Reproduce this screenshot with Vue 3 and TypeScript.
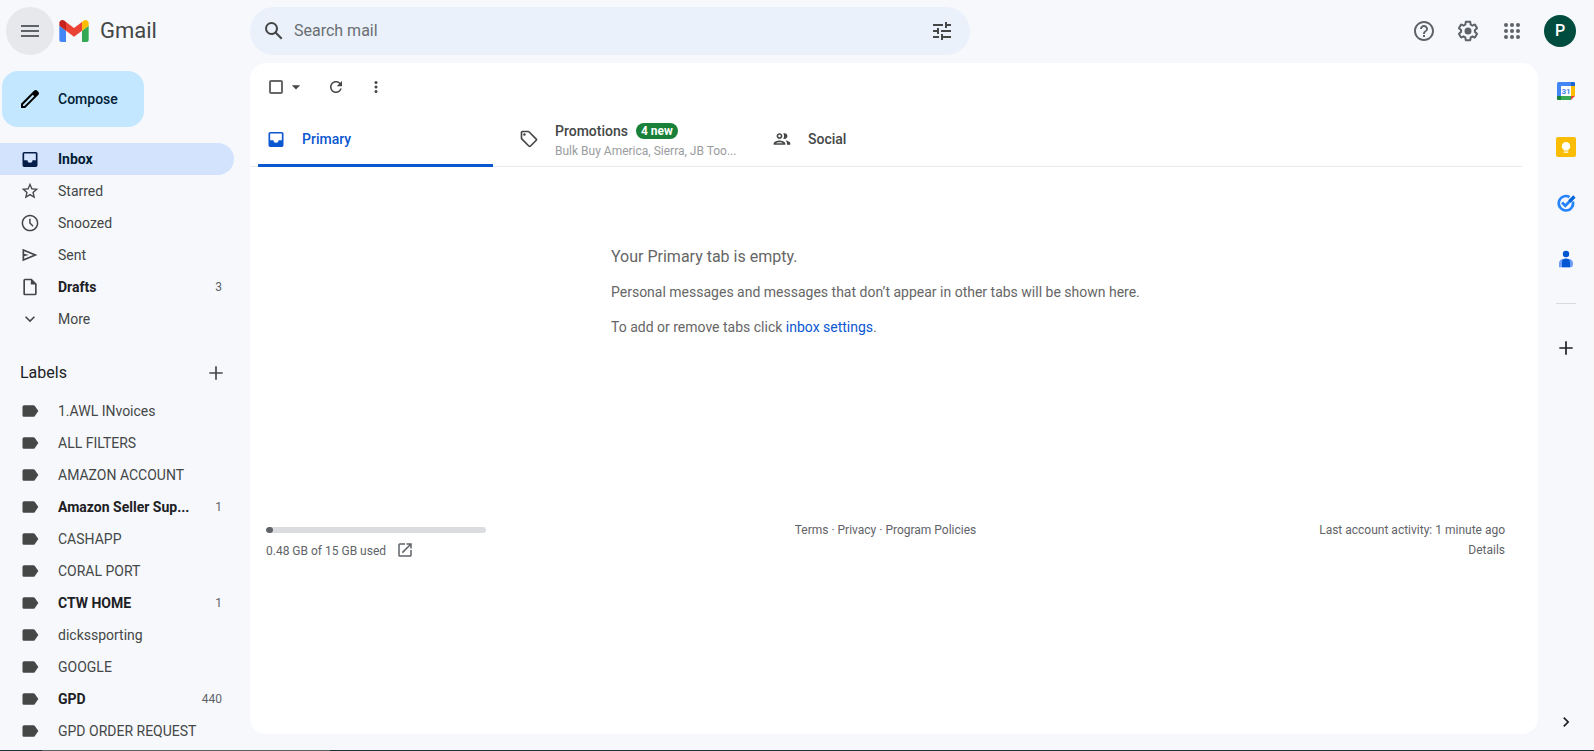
<script setup lang="ts">
import { ref } from 'vue'

interface NavItem {
  name: string
  icon: string
  count?: number
  bold?: boolean
  active?: boolean
}

interface LabelItem {
  name: string
  count?: number
}

const labelIcon =
  'M17.63 5.84C17.27 5.33 16.67 5 16 5L5 5.01C3.9 5.01 3 5.9 3 7v10c0 1.1.9 1.99 2 1.99L16 19c.67 0 1.27-.33 1.63-.84L22 12l-4.37-6.16z'
const inboxIcon =
  'M19 3.500H5a2 2 0 0 0-2 2v14a2 2 0 0 0 2 2h14a2 2 0 0 0 2-2v-14a2 2 0 0 0-2-2zm0 10h-4a3 3 0 0 1-6 0H5v-8h14v8z'

const folders: NavItem[] = [
  { name: 'Inbox', icon: inboxIcon, bold: true, active: true },
  {
    name: 'Starred',
    icon: 'M22 9.24l-7.19-.62L12 2 9.19 8.63 2 9.24l5.46 4.73L5.82 21 12 17.27 18.18 21l-1.63-7.03L22 9.24zM12 15.4l-3.76 2.27 1-4.28-3.32-2.88 4.38-.38L12 6.1l1.71 4.04 4.38.38-3.32 2.88 1 4.28L12 15.4z',
  },
  {
    name: 'Snoozed',
    icon: 'M12 2C6.5 2 2 6.5 2 12s4.5 10 10 10 10-4.5 10-10S17.5 2 12 2zm0 18.2c-4.5 0-8.2-3.7-8.2-8.2S7.500 3.800 12 3.800s8.200 3.700 8.200 8.200-3.700 8.200-8.200 8.200zM12.800 7H11v5.400l4.100 4.100 1.200-1.200-3.500-3.600V7z',
  },
  { name: 'Sent', icon: 'M3 4.500v15L21 12 3 4.500zm2 3L15.850 12 5 16.500v-3.100L10.500 12 5 10.600V7.500z' },
  {
    name: 'Drafts',
    icon: 'M14 2H6a2 2 0 0 0-2 2v16c0 1.100.9 2 2 2h12a2 2 0 0 0 2-2V8l-6-6zM6 20V4h7v5h5v11H6z',
    count: 3,
    bold: true,
  },
  { name: 'More', icon: 'M16.590 8.590L12 13.170 7.410 8.590 6 10l6 6 6-6z' },
]

const labels: LabelItem[] = [
  { name: '1.AWL INvoices' },
  { name: 'ALL FILTERS' },
  { name: 'AMAZON ACCOUNT' },
  { name: 'Amazon Seller Sup...', count: 1 },
  { name: 'CASHAPP' },
  { name: 'CORAL PORT' },
  { name: 'CTW HOME', count: 1 },
  { name: 'dickssporting' },
  { name: 'GOOGLE' },
  { name: 'GPD', count: 440 },
  { name: 'GPD ORDER REQUEST' },
]

const dots = [6, 12, 18]
const query = ref('')
const allSelected = ref(false)
const usedPercent = (0.48 / 15) * 100
</script>

<template>
  <div class="app">
    <header class="header">
      <div class="brand">
        <button class="round menu-btn" aria-label="Main menu">
          <svg class="i24" viewBox="0 0 24 24"><path d="M3 18h18v-2H3v2zm0-5h18v-2H3v2zm0-7v2h18V6H3z" /></svg>
        </button>
        <a class="logo" href="#">
          <svg viewBox="52 42 88 66">
            <path fill="#4285f4" d="M58 108h14V74L52 59v43c0 3.320 2.690 6 6 6" />
            <path fill="#34a853" d="M120 108h14c3.320 0 6-2.690 6-6V59l-20 15" />
            <path fill="#fbbc04" d="M120 48v26l20-15v-8c0-7.420-8.470-11.650-14.400-7.200" />
            <path fill="#ea4335" d="M72 74V48l24 18 24-18v26L96 92" />
            <path fill="#c5221f" d="M52 51v8l20 15V48l-5.600-4.200c-5.940-4.450-14.400-.22-14.400 7.200" />
          </svg>
          <span>Gmail</span>
        </a>
      </div>
      <form class="search" role="search" @submit.prevent>
        <button class="round small" aria-label="Search">
          <svg class="i24" viewBox="0 0 24 24"><path d="M20.490 19l-5.730-5.730C15.530 12.200 16 10.910 16 9.500A6.500 6.500 0 1 0 9.500 16c1.410 0 2.700-.47 3.770-1.240L19 20.490 20.490 19zM5 9.500C5 7.010 7.010 5 9.500 5S14 7.010 14 9.500 11.990 14 9.500 14 5 11.990 5 9.500z" /></svg>
        </button>
        <input v-model="query" type="text" placeholder="Search mail" aria-label="Search mail" />
        <button class="round small" type="button" aria-label="Show search options">
          <svg class="i24" viewBox="0 0 24 24"><path d="M3 17v2h6v-2H3zM3 5v2h10V5H3zm10 16v-2h8v-2h-8v-2h-2v6h2zM7 9v2H3v2h4v2h2V9H7zm14 4v-2H11v2h10zm-6-4h2V7h4V5h-4V3h-2v6z" /></svg>
        </button>
      </form>
      <div class="tools">
        <button class="round tool" aria-label="Support">
          <svg class="i24" viewBox="0 0 24 24"><path d="M11 18h2v-2h-2v2zm1-16C6.480 2 2 6.480 2 12s4.480 10 10 10 10-4.480 10-10S17.520 2 12 2zm0 18c-4.410 0-8-3.590-8-8s3.590-8 8-8 8 3.590 8 8-3.590 8-8 8zm0-14c-2.210 0-4 1.790-4 4h2c0-1.100.9-2 2-2s2 .9 2 2c0 2-3 1.750-3 5h2c0-2.250 3-2.500 3-5 0-2.210-1.790-4-4-4z" /></svg>
        </button>
        <button class="round tool" aria-label="Settings">
          <svg class="i24" viewBox="0 0 24 24">
            <path d="M13.850 22.250h-3.700c-.74 0-1.360-.54-1.450-1.270l-.27-1.890c-.27-.14-.53-.29-.79-.46l-1.800.72c-.7.26-1.470-.03-1.810-.65L2.200 15.530c-.35-.66-.2-1.440.36-1.880l1.530-1.190c-.01-.15-.02-.3-.02-.46 0-.15.01-.31.02-.46l-1.520-1.190c-.59-.45-.74-1.260-.37-1.880l1.850-3.190c.34-.62 1.110-.9 1.790-.63l1.810.73c.26-.17.52-.32.78-.46l.27-1.910c.09-.7.71-1.250 1.440-1.250h3.700c.74 0 1.360.54 1.450 1.270l.27 1.890c.27.14.53.29.79.46l1.800-.72c.71-.26 1.480.03 1.820.65l1.840 3.180c.36.66.2 1.440-.36 1.880l-1.520 1.190c.01.15.02.3.02.46s-.01.31-.02.46l1.520 1.190c.56.45.72 1.230.37 1.860l-1.860 3.220c-.34.62-1.110.9-1.800.63l-1.800-.72c-.26.17-.52.32-.78.46l-.27 1.910c-.1.68-.72 1.220-1.460 1.220zm-3.230-2h2.760l.37-2.550.53-.22c.44-.18.88-.44 1.340-.78l.45-.34 2.380.96 1.380-2.400-2.030-1.580.07-.56c.03-.26.06-.51.06-.78s-.03-.53-.06-.78l-.07-.56 2.030-1.580-1.390-2.400-2.390.96-.45-.35c-.42-.32-.87-.58-1.330-.77l-.52-.22-.37-2.550h-2.760l-.37 2.550-.53.21c-.44.19-.88.44-1.340.79l-.45.33-2.380-.95-1.390 2.390 2.030 1.580-.07.56a7 7 0 0 0-.06.79c0 .26.02.53.06.78l.07.56-2.030 1.580 1.380 2.400 2.390-.96.45.35c.43.33.86.58 1.330.77l.53.22.38 2.550z" />
            <circle cx="12" cy="12" r="3.500" />
          </svg>
        </button>
        <button class="round tool" aria-label="Google apps">
          <svg class="i24" viewBox="0 0 24 24">
            <template v-for="y in dots" :key="y">
              <circle v-for="x in dots" :key="x" :cx="x" :cy="y" r="2" />
            </template>
          </svg>
        </button>
        <button class="avatar" aria-label="Account">P</button>
      </div>
    </header>

    <div class="body">
      <aside class="side">
        <button class="compose">
          <svg class="i24" viewBox="0 0 24 24"><path d="M20.410 4.940l-1.350-1.350c-.78-.78-2.050-.78-2.830 0L3 16.820V21h4.180L20.410 7.770c.79-.78.79-2.050 0-2.830zm-14 14.120L5 19v-1.360l9.820-9.820 1.410 1.410-9.820 9.830z" /></svg>
          Compose
        </button>
        <nav class="nav">
          <a
            v-for="f in folders"
            :key="f.name"
            href="#"
            class="row"
            :class="{ bold: f.bold, active: f.active }"
          >
            <svg class="i20" viewBox="0 0 24 24"><path fill-rule="evenodd" :d="f.icon" /></svg>
            <span class="name">{{ f.name }}</span>
            <span v-if="f.count" class="count">{{ f.count }}</span>
          </a>
        </nav>
        <div class="labels-head">
          <h2>Labels</h2>
          <button aria-label="Create new label">
            <svg class="i20" viewBox="0 0 24 24"><path d="M20 13h-7v7h-2v-7H4v-2h7V4h2v7h7v2z" /></svg>
          </button>
        </div>
        <nav class="nav" aria-label="Labels">
          <a v-for="l in labels" :key="l.name" href="#" class="row" :class="{ bold: l.count }">
            <svg class="i20" viewBox="0 0 24 24"><path :d="labelIcon" /></svg>
            <span class="name">{{ l.name }}</span>
            <span v-if="l.count" class="count">{{ l.count }}</span>
          </a>
        </nav>
      </aside>

      <main class="card">
        <div class="toolbar">
          <input v-model="allSelected" class="check" type="checkbox" aria-label="Select all" />
          <button class="caret" aria-label="Select options">
            <svg class="i20" viewBox="0 0 24 24"><path d="M7 10l5 5 5-5z" /></svg>
          </button>
          <button class="act" aria-label="Refresh">
            <svg class="i18" viewBox="0 0 24 24"><path d="M17.650 6.350C16.200 4.900 14.210 4 12 4c-4.420 0-7.990 3.580-7.990 8s3.570 8 7.990 8c3.730 0 6.840-2.550 7.730-6h-2.080c-.82 2.330-3.040 4-5.650 4-3.310 0-6-2.690-6-6s2.690-6 6-6c1.660 0 3.140.69 4.220 1.780L13 11h7V4l-2.350 2.350z" /></svg>
          </button>
          <button class="act" aria-label="More">
            <svg class="i18" viewBox="0 0 24 24">
              <circle v-for="y in dots" :key="y" cx="12" :cy="y" r="2" />
            </svg>
          </button>
        </div>

        <div class="tabs" role="tablist">
          <button class="tab selected" role="tab" aria-selected="true">
            <svg class="i20" viewBox="0 0 24 24"><path fill-rule="evenodd" :d="inboxIcon" /></svg>
            <span class="tab-title">Primary</span>
          </button>
          <button class="tab" role="tab" aria-selected="false">
            <svg class="i20" viewBox="0 0 24 24">
              <path fill-rule="evenodd" d="M21.410 11.410l-8.830-8.830c-.37-.37-.88-.58-1.410-.58H4c-1.100 0-2 .9-2 2v7.170c0 .53.21 1.040.59 1.410l8.830 8.830c.78.78 2.050.78 2.830 0l7.170-7.170c.78-.78.78-2.040-.01-2.830zM12.830 20L4 11.170V4h7.170L20 12.830 12.830 20z" />
              <circle cx="6.500" cy="6.500" r="1.500" />
            </svg>
            <span class="tab-text">
              <span class="tab-line"><span class="tab-title">Promotions</span><span class="badge">4 new</span></span>
              <span class="tab-sub">Bulk Buy America, Sierra, JB Too...</span>
            </span>
          </button>
          <button class="tab" role="tab" aria-selected="false">
            <svg class="i20" viewBox="0 0 24 24"><path fill-rule="evenodd" d="M9 13.750c-2.340 0-7 1.170-7 3.500V19h14v-1.750c0-2.330-4.660-3.500-7-3.500zM4.340 17c.84-.58 2.870-1.250 4.660-1.250s3.820.67 4.660 1.250H4.340zM9 12c1.930 0 3.500-1.570 3.500-3.500S10.930 5 9 5 5.500 6.570 5.500 8.500 7.070 12 9 12zm0-5c.83 0 1.500.67 1.500 1.500S9.830 10 9 10s-1.500-.67-1.500-1.500S8.170 7 9 7zm7.040 6.810c1.160.84 1.960 1.960 1.960 3.440V19h4v-1.750c0-2.020-3.500-3.170-5.960-3.440zM15 12c1.930 0 3.500-1.570 3.500-3.500S16.930 5 15 5c-.54 0-1.040.13-1.500.35.63.89 1 1.980 1 3.150s-.37 2.260-1 3.150c.46.22.96.35 1.500.35z" /></svg>
            <span class="tab-title">Social</span>
          </button>
        </div>

        <section class="empty">
          <p class="lead">Your Primary tab is empty.</p>
          <p>Personal messages and messages that don’t appear in other tabs will be shown here.</p>
          <p>To add or remove tabs click <a href="#">inbox settings</a>.</p>
        </section>

        <footer class="foot">
          <div class="storage">
            <div class="bar"><div class="used" :style="{ width: usedPercent + '%' }"></div></div>
            <a href="#" class="quota">
              <span>0.48 GB of 15 GB used</span>
              <svg class="i18" viewBox="0 0 24 24"><path d="M19 19H5V5h7V3H5a2 2 0 0 0-2 2v14a2 2 0 0 0 2 2h14c1.100 0 2-.9 2-2v-7h-2v7zM14 3v2h3.590l-9.830 9.830 1.410 1.410L19 6.410V10h2V3h-7z" /></svg>
            </a>
          </div>
          <div class="legal"><a href="#">Terms</a> · <a href="#">Privacy</a> · <a href="#">Program Policies</a></div>
          <div class="activity">Last account activity: 1 minute ago<br /><a href="#">Details</a></div>
        </footer>
      </main>

      <aside class="rail" aria-label="Side panel">
        <button aria-label="Calendar">
          <svg class="i20" viewBox="0 0 20 20">
            <rect x="1" y="1" width="18" height="18" rx="1.500" fill="#4285f4" />
            <path fill="#1967d2" d="M15 1h2.500A1.500 1.500 0 0 1 19 2.500V5h-4z" />
            <path fill="#fbbc04" d="M15 5h4v10h-4z" />
            <path fill="#34a853" d="M5 15h10v4H5z" />
            <path fill="#188038" d="M1 15h4v4H2.500A1.500 1.500 0 0 1 1 17.500z" />
            <path fill="#f6f8fc" d="M15 15h5v5h-5z" />
            <path fill="#ea4335" d="M15 15h4l-4 4z" />
            <path fill="#fff" d="M5 5h10v10H5z" />
            <text x="10" y="13" text-anchor="middle" class="cal">31</text>
          </svg>
        </button>
        <button aria-label="Keep">
          <svg class="i20" viewBox="0 0 20 20">
            <rect width="20" height="20" rx="2" fill="#fbbc04" />
            <path fill="#fff" d="M10 5a4.200 4.200 0 0 0-2.300 7.700V13.500h4.600v-.8A4.200 4.200 0 0 0 10 5zM7.700 14.500h4.600v1.300H7.700z" />
          </svg>
        </button>
        <button aria-label="Tasks">
          <svg class="i20" viewBox="0 0 20 20">
            <g fill="none">
              <path stroke="#2684fc" stroke-width="2.600" d="M13.500 4A7.200 7.200 0 1 0 16.900 8.500" />
              <path stroke="#2684fc" stroke-width="2.800" d="M6 9.500l3.300 3.300 5.200-5.300" />
              <path stroke="#0066da" stroke-width="3.200" d="M13.400 8.500l5-5" />
            </g>
          </svg>
        </button>
        <button aria-label="Contacts">
          <svg class="i20" viewBox="0 0 20 20">
            <circle cx="10" cy="5" r="3.200" fill="#0056d2" />
            <path fill="#6f9cf8" d="M3 18.200v-4A4.200 4.200 0 0 1 7.200 10h5.600a4.200 4.200 0 0 1 4.200 4.200q0 4-2 4z" />
            <path fill="#0056d2" d="M6 18.200v-5Q6 9.600 10 9.600t4 3.600v5z" />
          </svg>
        </button>
        <hr />
        <button class="dark" aria-label="Get add-ons">
          <svg class="i20" viewBox="0 0 24 24"><path d="M20 13h-7v7h-2v-7H4v-2h7V4h2v7h7v2z" /></svg>
        </button>
        <button class="dark hide" aria-label="Hide side panel">
          <svg class="i20" viewBox="0 0 24 24"><path d="M8.600 16.600l1.400 1.400 6-6-6-6-1.400 1.400 4.600 4.600z" /></svg>
        </button>
      </aside>
    </div>
    <div class="edge"></div>
  </div>
</template>

<style>
body {
  margin: 0;
  background: #f6f8fc;
}
</style>

<style scoped>
.app {
  display: flex;
  flex-direction: column;
  height: 100vh;
  overflow: hidden;
  background: #f6f8fc;
  color: #444746;
  font-family: Roboto, 'Liberation Sans', sans-serif;
  font-size: 14px;
  line-height: 20px;
}
button {
  border: 0;
  padding: 0;
  background: none;
  color: inherit;
  font: inherit;
  cursor: pointer;
}
a {
  color: inherit;
  text-decoration: none;
}
svg {
  flex: none;
  display: block;
  fill: currentColor;
}
.i24 {
  width: 24px;
  height: 24px;
}
.i20 {
  width: 20px;
  height: 20px;
}
.i18 {
  width: 18px;
  height: 18px;
}
.header {
  flex: none;
  display: flex;
  align-items: center;
  height: 62px;
}
.brand {
  flex: none;
  display: flex;
  align-items: center;
  box-sizing: border-box;
  width: 250px;
  padding-left: 6px;
}
.round {
  flex: none;
  display: grid;
  place-items: center;
  width: 48px;
  height: 48px;
  border-radius: 50%;
}
.menu-btn {
  background: #e7e8ec;
  color: #5f6368;
}
.logo {
  display: flex;
  align-items: center;
  gap: 11px;
  padding-left: 5px;
  font-size: 22px;
  line-height: 24px;
}
.logo svg {
  width: 30px;
  height: 22px;
}
.search {
  flex: 0 1 720px;
  display: flex;
  align-items: center;
  box-sizing: border-box;
  height: 48px;
  padding: 0 8px 0 4px;
  border-radius: 24px;
  background: #eaf1fb;
}
.small {
  width: 40px;
  height: 40px;
}
.search input {
  flex: 1;
  min-width: 0;
  border: 0;
  padding: 0;
  outline: 0;
  background: none;
  color: #1f1f1f;
  font: inherit;
  font-size: 16px;
}
.search input::placeholder {
  color: #6a6e72;
  opacity: 1;
}
.tools {
  display: flex;
  align-items: center;
  gap: 4px;
  margin-left: auto;
  padding-right: 18px;
  color: #5f6368;
}
.tool {
  width: 40px;
  height: 40px;
}
.avatar {
  width: 32px;
  height: 32px;
  margin-left: 8px;
  border-radius: 50%;
  background: #004d40;
  color: #fff;
  font-size: 16px;
  font-weight: 500;
}
.body {
  flex: 1;
  display: flex;
  min-height: 0;
  padding-top: 1px;
}
.side {
  flex: none;
  width: 250px;
  padding-top: 8px;
  box-sizing: border-box;
  overflow: hidden;
}
.compose {
  display: flex;
  align-items: center;
  gap: 16px;
  min-width: 142px;
  height: 56px;
  margin: 0 0 16px 2px;
  padding: 0 24px 0 16px;
  border-radius: 16px;
  background: #c2e7ff;
  color: #001d35;
  font-weight: 500;
}
.compose svg {
  fill: #000;
}
.row {
  display: flex;
  align-items: center;
  height: 32px;
  margin-right: 16px;
  padding: 0 12px 0 20px;
  border-radius: 0 16px 16px 0;
}
.name {
  flex: 1;
  min-width: 0;
  margin: 0 20px 0 18px;
  overflow: hidden;
  text-overflow: ellipsis;
  white-space: nowrap;
}
.bold .name {
  color: #202124;
  font-weight: 700;
}
.active {
  background: #d3e3fd;
  color: #041e49;
}
.active .name {
  color: #001d35;
}
.count {
  color: #5f6368;
  font-size: 12px;
}
.labels-head {
  display: flex;
  align-items: center;
  justify-content: space-between;
  box-sizing: border-box;
  height: 60px;
  padding: 16px 24px 0 20px;
}
.labels-head h2 {
  margin: 0;
  color: #202124;
  font-size: 16px;
  font-weight: 400;
}
.card {
  flex: 1;
  min-width: 0;
  margin-bottom: 16px;
  padding-right: 16px;
  border-radius: 16px;
  background: #fff;
}
.toolbar {
  display: flex;
  align-items: center;
  height: 48px;
  padding-left: 19px;
}
.check {
  appearance: none;
  width: 14px;
  height: 14px;
  margin: 0;
  border: 2px solid #666968;
  border-radius: 2px;
}
.check:checked {
  background: #666968;
}
.caret {
  margin: 0 10px 0 3px;
}
.act {
  display: grid;
  place-items: center;
  width: 40px;
  height: 40px;
}
.tabs {
  display: flex;
  gap: 18px;
  padding-left: 8px;
  border-bottom: 1px solid #e9ebee;
}
.tab {
  display: flex;
  align-items: center;
  gap: 16px;
  box-sizing: border-box;
  width: 235px;
  height: 56px;
  margin-bottom: -1px;
  padding: 0 8px;
  border-top: 3px solid transparent;
  border-bottom: 3px solid transparent;
  text-align: left;
}
.selected {
  border-bottom-color: #0b57d0;
  color: #0b57d0;
}
.tab-title {
  font-weight: 500;
}
.tab-text {
  flex: 1;
  min-width: 0;
  padding-top: 4px;
}
.tab-line {
  display: flex;
  align-items: center;
  gap: 8px;
}
.badge {
  padding: 0 5px;
  border-radius: 8px;
  background: #188038;
  color: #fff;
  font-size: 12px;
  font-weight: 700;
  line-height: 16px;
}
.tab-sub {
  display: block;
  color: #9a9c9e;
  font-size: 12px;
  white-space: nowrap;
}
.empty {
  width: 550px;
  max-width: 100%;
  margin: 80px auto 0;
  color: #666;
}
.empty p {
  margin: 0 0 15px;
}
.empty .lead {
  font-size: 16px;
}
.empty a {
  color: #0b57d0;
}
.foot {
  display: grid;
  grid-template-columns: 1fr 1fr 1fr;
  margin-top: 183px;
  padding: 0 17px 0 16px;
  color: #5f6368;
  font-size: 12px;
}
.bar {
  width: 220px;
  height: 6px;
  margin: 7px 0 6px;
  overflow: hidden;
  border-radius: 3px;
  background: #dadce0;
}
.used {
  height: 6px;
  border-radius: 3px;
  background: #5f6368;
}
.quota {
  display: flex;
  align-items: center;
  gap: 10px;
}
.quota span {
  padding-top: 2px;
}
.legal {
  text-align: center;
}
.activity {
  text-align: right;
}
.rail {
  flex: none;
  display: flex;
  flex-direction: column;
  align-items: center;
  width: 56px;
}
.rail button {
  display: grid;
  place-items: center;
  width: 56px;
  height: 56px;
}
.rail hr {
  width: 20px;
  height: 1px;
  margin: 16px 0;
  border: 0;
  background: #d8dadd;
}
.rail .dark {
  color: #1f1f1f;
}
.rail .hide {
  margin-top: auto;
}
.cal {
  fill: #4285f4;
  font-size: 8px;
  font-weight: 700;
}
.edge {
  flex: none;
  height: 1px;
  background: linear-gradient(90deg, #1b2f38 42px, #5c6064 42px, #5c6064 330px, #1b2f38 330px);
}
</style>
